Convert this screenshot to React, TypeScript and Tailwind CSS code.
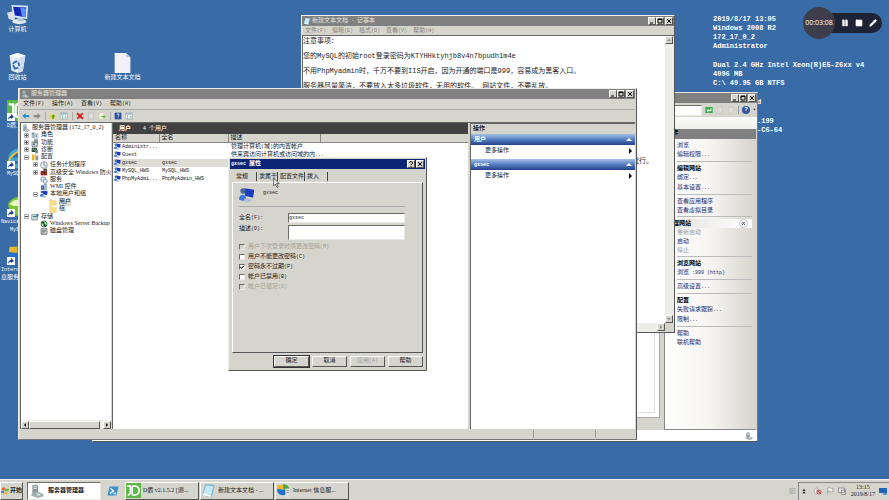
import React from 'react';
import { Pause, Square, Pencil } from 'lucide-react';

type IconName =
  | 'computer'
  | 'recycle'
  | 'file'
  | 'shield'
  | 'mysql'
  | 'navicat'
  | 'globe'
  | 'server'
  | 'user'
  | 'roles'
  | 'features'
  | 'diag'
  | 'config'
  | 'clock'
  | 'wall'
  | 'service'
  | 'wmi'
  | 'folder'
  | 'storage'
  | 'backup'
  | 'disk'
  | 'notepad'
  | 'powershell'
  | 'back'
  | 'forward'
  | 'up'
  | 'panel'
  | 'delete'
  | 'page'
  | 'export'
  | 'help'
  | 'go'
  | 'flag'
  | 'windows';

const drawings: Record<IconName, React.ReactNode> = {
  computer: (
    <>
      <path d="M0 10l8-2 1 11-7-2z" fill="#d9dfe6" />
      <ellipse cx="14" cy="20" rx="8" ry="3" fill="#e6ecf2" />
      <path d="M12 15h6l1 5h-6z" fill="#b3c2d3" />
      <path d="M5 1l19 1-1 15-16-2z" fill="#dce8f5" />
      <path d="M7 3l15 1-1 11-12-2z" fill="#1226ae" />
      <path d="M15 4l7 1-1 10-4-1z" fill="#5b8df0" />
    </>
  ),
  recycle: (
    <>
      <path d="M3 4l9-3 9 3-3 18-6 2-7-3z" fill="#e3ebf3" />
      <path d="M3 4l9 3 9-3-9-3z" fill="#fbfdff" />
      <path d="M13 7l8-3-3 18-5 2z" fill="#cfdce9" />
      <path d="M7 14a4 4 0 0 1 5-3M7 15l2 4 4-1M13 12l1 4" fill="none" stroke="#2b66bf" strokeWidth="2" />
    </>
  ),
  file: (
    <>
      <path d="M3 1h13l5 5v18H3z" fill="#f0f2f8" />
      <path d="M16 1l5 5h-5z" fill="#bfc8d9" />
    </>
  ),
  shield: (
    <>
      <path d="M0 0h24v24H0z" fill="#5cb947" />
      <path d="M2 5h5v11l-4 4M10 5v14M10 5h5c8 1 8 13 0 14h-5" fill="none" stroke="#fff" strokeWidth="2.5" />
    </>
  ),
  mysql: (
    <>
      <circle cx="13" cy="12" r="9" fill="none" stroke="#42a5d8" strokeWidth="5" />
      <path d="M5 13h17" stroke="#42a5d8" strokeWidth="4" />
      <path d="M1 20C2 9 12 2 23 2" fill="none" stroke="#f2c02c" strokeWidth="2" />
    </>
  ),
  navicat: (
    <>
      <path d="M1 9C8-2 20-1 24 7v13c-6 4-18 4-21-3z" fill="#79c52c" />
      <path d="M3 9c6-7 14-6 17-2-4 5-11 6-17 2z" fill="#e9fbc8" />
    </>
  ),
  globe: (
    <>
      <path d="M3 3h9v7H2z" fill="#e9b62d" />
      <path d="M11 2c8 0 10 4 10 8l-9 2z" fill="#58a647" />
      <path d="M2 9l12 2 6 3c-3 8-16 7-18-1z" fill="#2272c9" />
      <path d="M15 9h7v14h-7z" fill="#dce0e2" />
      <path d="M17 12h4M17 15h4" stroke="#6f7b83" strokeWidth="1" />
    </>
  ),
  server: (
    <>
      <path d="M4 2l7-1 3 2v15l-7 2-3-3z" fill="#8b999d" />
      <path d="M6 5l6-1M6 8l6-1" stroke="#e6eded" strokeWidth="1.5" />
      <path d="M2 18l10-5 11 4v4l-9 3-12-4z" fill="#a4b0b2" />
      <path d="M11 16l8 2-5 3z" fill="#dae2e2" />
    </>
  ),
  user: (
    <>
      <path d="M8 2l15 2-2 12-12-3z" fill="#1d3bc0" />
      <circle cx="6" cy="6" r="4" fill="#47669d" />
      <path d="M0 19c0-10 10-9 11-2l-4 4z" fill="#3976dd" />
      <path d="M9 17l11 2-5 4-9-2z" fill="#adbdd0" />
    </>
  ),
  roles: (
    <>
      <path d="M2 4h9v17H2z" fill="#a9b7bd" />
      <path d="M10 8h11v14H10z" fill="#dce5ea" stroke="#647d89" />
      <path d="M4 8h5M13 12h5M13 16h5" stroke="#397c91" strokeWidth="2" />
    </>
  ),
  features: (
    <>
      <path d="M3 9h16v13H3z" fill="#dce1e3" stroke="#4c5459" strokeWidth="2" />
      <path d="M10 2h10v10H10z" fill="#7f9599" stroke="#4c5459" />
      <circle cx="9" cy="16" r="3" fill="#3c708f" />
    </>
  ),
  diag: (
    <>
      <path d="M2 5h16v13H2z" fill="#334b45" />
      <path d="M4 13l4-4 3 4 4-6" fill="none" stroke="#5ee374" strokeWidth="2" />
      <path d="M13 12h8v10h-8z" fill="#7c8988" />
    </>
  ),
  config: (
    <>
      <path d="M3 5h8v17H3z" fill="#e5b62e" />
      <path d="M9 2h6v20H9z" fill="#f2d970" />
      <path d="M14 8h8v14h-8z" fill="#8c9ba9" />
    </>
  ),
  clock: (
    <>
      <circle cx="12" cy="12" r="10" fill="#edf1f5" stroke="#66737c" strokeWidth="2" />
      <path d="M12 5v7l5 3" fill="none" stroke="#334452" strokeWidth="2" />
    </>
  ),
  wall: (
    <>
      <path d="M2 9h19v13H2z" fill="#a82b23" />
      <path d="M2 13h19M2 18h19M8 9v4M14 13v5" stroke="#5b1711" strokeWidth="1" />
      <path d="M10 2h11v9H10z" fill="#5d4f4b" />
    </>
  ),
  service: (
    <>
      <circle cx="10" cy="10" r="8" fill="#c4d8e7" stroke="#7193ac" strokeWidth="2" />
      <circle cx="16" cy="16" r="6" fill="#e5edf2" stroke="#628ba9" strokeWidth="2" />
    </>
  ),
  wmi: (
    <>
      <path d="M3 7h11v14H3z" fill="#507ab3" />
      <path d="M12 3h8v18h-8z" fill="#aebfcb" stroke="#546c81" />
    </>
  ),
  folder: <path d="M2 5h8l3 3h9v14H2z" fill="#f6dd8b" stroke="#ddb854" />,
  storage: (
    <>
      <path d="M2 5h17v16H2z" fill="#c9d9de" stroke="#668a95" strokeWidth="2" />
      <path d="M6 9h12v3H6z" fill="#467d91" />
      <path d="M17 3h5v8h-5z" fill="#32629f" />
    </>
  ),
  backup: (
    <>
      <circle cx="12" cy="12" r="9" fill="#c4e7c0" stroke="#40824f" strokeWidth="3" />
      <path d="M4 6l8 7V6M20 18l-8-6v7" stroke="#1e7532" strokeWidth="3" />
    </>
  ),
  disk: (
    <>
      <path d="M3 5h18v17H3z" fill="#d5d6d5" stroke="#505653" strokeWidth="2" />
      <path d="M6 10h11M6 14h11M6 18h7" stroke="#505653" strokeWidth="2" />
    </>
  ),
  notepad: (
    <>
      <path d="M7 2l15 1-5 20-15-3z" fill="#6db5d3" />
      <path d="M8 4l12 1-4 14-12-2z" fill="#c7e9f4" />
      <path d="M3 18l13 3" stroke="#fff" strokeWidth="3" />
    </>
  ),
  powershell: (
    <>
      <path d="M5 3h18l-4 18H1z" fill="#3a91d0" />
      <path d="M7 7l6 5-7 5M13 17h5" fill="none" stroke="#fff" strokeWidth="3" />
    </>
  ),
  back: <path d="M11 3v6h11v7H11v5L1 12z" fill="#2a8fd0" />,
  forward: <path d="M13 3v6H2v7h11v5l10-9z" fill="#898c8b" />,
  up: (
    <>
      <path d="M2 5h8l3 3h9v14H2z" fill="#f0d567" />
      <path d="M10 21v-7H6l7-7 6 7h-4v7z" fill="#46a43e" />
    </>
  ),
  panel: (
    <>
      <path d="M1 3h22v18H1z" fill="#fff" stroke="#8b9eac" strokeWidth="2" />
      <path d="M2 4h20v4H2z" fill="#8cb0c4" />
      <path d="M8 9v12M14 13h6M14 17h6" stroke="#56987b" strokeWidth="2" />
    </>
  ),
  delete: <path d="M3 4l18 16M20 4L4 20" stroke="#d2221f" strokeWidth="6" />,
  page: <path d="M5 3h14v18H5z" fill="#e2e2df" stroke="#b9b9b4" strokeWidth="2" />,
  export: (
    <>
      <path d="M3 2h14v20H3z" fill="#f4f3db" stroke="#b8b894" />
      <path d="M10 12h7V8l6 6-6 6v-4h-7z" fill="#6db551" />
    </>
  ),
  help: (
    <>
      <path d="M2 2h20v20H2z" fill="#294b9c" />
      <path d="M9 9c0-5 7-4 6 0 0 2-3 3-3 5M12 17v2" fill="none" stroke="#fff" strokeWidth="2.5" />
    </>
  ),
  go: (
    <>
      <path d="M1 3h22v18H1z" fill="#35ad40" />
      <path d="M18 7v7H7M11 9l-5 5 5 4" fill="none" stroke="#fff" strokeWidth="3" />
    </>
  ),
  flag: <path d="M5 23V3c6-3 8 3 16 0v11c-7 3-10-3-16 0" fill="#eee" stroke="#8d8d88" strokeWidth="2" />,
  windows: (
    <>
      <path d="M3 5c4-2 5-2 8 0l-2 7c-3-2-5-2-8 0z" fill="#e2652d" />
      <path d="M12 6c4 2 6 2 10 0l-2 7c-4 2-6 1-10 0z" fill="#72b53e" />
      <path d="M1 13c3-2 5-1 8 0l-2 7c-3-2-4-2-7 0z" fill="#3e83cd" />
      <path d="M10 14c4 2 6 2 9 0l-2 7c-3 2-6 2-9 0z" fill="#edbd31" />
    </>
  ),
};

const Icon = ({ name, className = 'size-2' }: { name: IconName; className?: string }) => (
  <svg viewBox="0 0 24 24" className={`shrink-0 ${className}`} aria-hidden="true">
    {drawings[name]}
  </svg>
);

// Latin runs are set narrower, so they stay close to half the width of a Chinese character
const Txt = ({ children, latin = 'text-[5px]' }: { children: string; latin?: string }) => (
  <>
    {children.split(/([ -~]+)/).map((part, i) =>
      i % 2 ? (
        <span key={i} className={`whitespace-pre ${latin}`}>
          {part}
        </span>
      ) : (
        part
      ),
    )}
  </>
);

const bevel = 'border border-t-white border-l-white border-r-[#55554f] border-b-[#55554f] bg-[#d6d5cd]';
const sunken = 'border border-t-[#6b6b66] border-l-[#6b6b66] border-r-[#e9e8e2] border-b-[#e9e8e2]';

const CaptionButtons = ({ kinds = ['min', 'max', 'close'] }: { kinds?: string[] }) => (
  <div className="ml-auto flex">
    {kinds.map((kind) => (
      <button key={kind} aria-label={kind} className={`size-2 ${bevel} ${kind === 'close' ? 'ml-px' : ''}`}>
        <svg viewBox="0 0 6 6" className="size-full" fill="none" stroke="#000" strokeWidth="1">
          {kind === 'min' && <path d="M1 5h3" />}
          {kind === 'max' && <path d="M1 1h4v4H1zM1 1.5h4" />}
          {kind === 'close' && <path d="M1 1l4 4M5 1L1 5" />}
          {kind === 'help' && <path d="M1.500 2c0-2 3-2 3 0 0 1-1.500 1-1.500 2M3 5v1" />}
        </svg>
      </button>
    ))}
  </div>
);

const ScrollButton = ({ d, label, off }: { d: string; label: string; off?: boolean }) => (
  <button aria-label={label} className={`size-2 shrink-0 ${bevel}`}>
    <svg viewBox="0 0 6 6" className="size-full" fill={off ? '#8a8a85' : '#000'}>
      <path d={d} />
    </svg>
  </button>
);

const desktopIcons: { icon: IconName; label: string[]; shortcut?: boolean }[] = [
  { icon: 'computer', label: ['计算机'] },
  { icon: 'recycle', label: ['回收站'] },
  { icon: 'shield', label: ['D盾_Web'], shortcut: true },
  { icon: 'mysql', label: ['MySQL-F'], shortcut: true },
  { icon: 'navicat', label: ['Navicat for', 'MySQL'], shortcut: true },
  { icon: 'globe', label: ['Internet 信', '息服务(IIS)'], shortcut: true },
];

const DesktopIcon = ({ icon, label, shortcut }: { icon: IconName; label: string[]; shortcut?: boolean }) => (
  <button className="relative flex h-12 w-[35px] flex-col items-center text-white">
    <Icon name={icon} className="size-[21px]" />
    {shortcut && (
      <svg viewBox="0 0 8 8" className="absolute left-[7px] top-[13px] size-2">
        <path d="M0 0h8v8H0z" fill="#fff" />
        <path d="M1 7c0-3 2-4 3-4V1l3 3-3 2V5C3 5 2 5 1 7z" fill="#13449b" />
      </svg>
    )}
    <span className="mt-px flex flex-col items-center leading-[7px] whitespace-nowrap">
      {label.map((line) => (
        <span key={line}>
          <Txt>{line}</Txt>
        </span>
      ))}
    </span>
  </button>
);

const systemInfo = [
  ['2019/8/17 13:05', 'Windows 2008 R2', '172_17_0_2', 'Administrator'],
  ['Dual 2.4 GHz Intel Xeon(R)E5-26xx v4', '4096 MB', 'C:\\ 49.95 GB NTFS'],
];
const systemInfoTail = [['d'], ['.199', '-C6-64']];

const WallpaperInfo = () => (
  <div className="absolute left-[713px] top-[15px] flex flex-col gap-[10px] font-['Liberation_Mono',monospace] text-[7px] leading-[9px] font-bold whitespace-pre text-white">
    {systemInfo.map((group) => (
      <div key={group[0]}>
        {group.map((line) => (
          <p key={line}>{line}</p>
        ))}
      </div>
    ))}
    {systemInfoTail.map((group) => (
      <div key={group[0]} className="pl-11">
        {group.map((line) => (
          <p key={line}>{line}</p>
        ))}
      </div>
    ))}
  </div>
);

const siteActions: { title?: string; items: { text: string; off?: boolean }[]; bar?: boolean }[] = [
  { items: [{ text: '浏览' }, { text: '编辑权限...' }] },
  { title: '编辑网站', items: [{ text: '绑定...' }, { text: '基本设置...' }] },
  { items: [{ text: '查看应用程序' }, { text: '查看虚拟目录' }] },
  { title: '理网站', bar: true, items: [{ text: '重新启动', off: true }, { text: '启动' }, { text: '停止', off: true }] },
  { title: '浏览网站', items: [{ text: '浏览 :999 (http)' }] },
  { items: [{ text: '高级设置...' }] },
  { title: '配置', items: [{ text: '失败请求跟踪...' }, { text: '限制...' }] },
  { items: [{ text: '帮助' }, { text: '联机帮助' }] },
];

const IisWindow = () => (
  <section className="absolute left-[92px] top-[92px] flex h-[350px] w-[666px] flex-col border border-t-[#e8e7e1] border-l-[#e8e7e1] border-r-[#777] border-b-[#555] bg-[#d6d5cd]">
    <header className="flex h-[10px] items-center bg-[#808080] px-px">
      <CaptionButtons />
    </header>
    <div className="flex h-[14px] items-center gap-[3px] pr-px pl-1">
      <input aria-label="地址" readOnly className={`h-[11px] flex-1 bg-white ${sunken}`} />
      <button aria-label="转到"><Icon name="go" /></button>
      <button aria-label="停止"><Icon name="page" className="size-2 opacity-50" /></button>
      <button aria-label="刷新"><Icon name="page" className="size-2 opacity-70" /></button>
      <span className="h-2 w-px bg-[#999]" />
      <button aria-label="帮助" className="flex size-2 items-center justify-center rounded-full bg-[#3157a4] text-[6px] leading-none font-bold text-white">?</button>
      <span className="text-[5px]">▾</span>
    </div>
    <div className="h-3 bg-linear-to-b from-[#fbfbfa] to-[#eeeeea]" />
    <div className="flex min-h-0 flex-1">
      <div className="mb-3 mr-1 flex-1 border-r border-b border-[#aaa] bg-white pr-1 pb-1">
        <div className="size-full border-r border-b border-[#ddd]" />
      </div>
      <aside className="mr-px w-[92px] border-b border-l border-[#888] bg-linear-to-r from-white via-[#f5f4f1] to-[#d6d4cc] text-[#2a2468]">
        <h2 className="h-[10px] bg-[#808080] pl-px font-bold text-black">操作</h2>
        {siteActions.map(({ title, items, bar }, i) => (
          <div key={i} className="mr-1 ml-3 border-b border-[#bbb] pt-[2px] pb-px leading-[9px] last:border-b-0">
            {title && (
              <h3 className={`flex font-bold text-black ${bar ? '-ml-2 bg-linear-to-r from-[#e2e1dc] to-white pl-1' : ''}`}>
                {title}
                {bar && (
                  <span className="mr-1 ml-auto flex size-[9px] items-center justify-center rounded-full border border-[#ccc] bg-white">
                    <svg viewBox="0 0 6 6" className="size-[5px]" fill="none" stroke="#333">
                      <path d="M1 3l2-2 2 2M1 5l2-2 2 2" />
                    </svg>
                  </span>
                )}
              </h3>
            )}
            {items.map(({ text, off }) => (
              <a key={text} href="#" className={`block ${off ? 'text-[#999]' : ''}`}>
                <Txt>{text}</Txt>
              </a>
            ))}
          </div>
        ))}
      </aside>
    </div>
    <footer className="flex h-[11px] items-center justify-end bg-white px-1">
      <Icon name="server" />
    </footer>
  </section>
);

const noteText = [
  '注意事项：',
  '您的MySQL的初始root登录密码为KTYHHktyhjb8v4n7bpudh1m4e',
  '不用PhpMyadmin时，千万不要到IIS开启，因为开通的端口是999，容易成为黑客入口。',
  '服务器尽量简洁，不要放入太多垃圾软件，无用的软件。 网站文件，不要乱放。',
  '',
  '',
  '',
  '',
  '\u3000'.repeat(47) + '就行。',
].join('\n');

const NotepadWindow = () => (
  <section className="absolute left-[301px] top-[15px] flex h-[318px] w-[374px] flex-col border border-t-[#f2f1ec] border-l-[#f2f1ec] border-r-[#555] border-b-[#555] bg-[#d6d5cd]">
    <header className="flex h-[10px] items-center gap-px bg-[#808080] px-px text-[#e6e5de]">
      <Icon name="notepad" />
      <h1><Txt>新建文本文档 - 记事本</Txt></h1>
      <CaptionButtons />
    </header>
    <nav className="flex h-[9px] items-center gap-[6px] px-[3px] text-[#84847e]">
      {['文件(F)', '编辑(E)', '格式(O)', '查看(V)', '帮助(H)'].map((item) => (
        <button key={item}><Txt>{item}</Txt></button>
      ))}
    </nav>
    <div className="flex min-h-0 flex-1 border-t border-l border-[#666] bg-white">
      <textarea
        aria-label="文档内容"
        readOnly
        wrap="off"
        defaultValue={noteText}
        className="-mt-[2px] flex-1 resize-none overflow-hidden font-['Liberation_Mono','Noto_Sans_CJK_SC',monospace] text-[7px] leading-[15px] text-[#222]"
      />
      <div className="flex w-[9px] flex-col justify-between bg-[#edece7]">
        <ScrollButton label="向上滚动" d="M1 4h4L3 2z" off />
        <ScrollButton label="向下滚动" d="M1 2h4L3 4z" off />
      </div>
    </div>
    <div className="flex h-[9px] justify-end bg-[#edece7]">
      <ScrollButton label="向右滚动" d="M2 1v4l2-2z" off />
      <span className="w-[9px] bg-[#d6d5cd]" />
    </div>
  </section>
);

const treeRows: { icon: IconName; text: string; level: number; mark?: string; active?: boolean }[] = [
  { icon: 'server', text: '服务器管理器 (172_17_0_2)', level: 0 },
  { icon: 'roles', text: '角色', level: 1, mark: '+' },
  { icon: 'features', text: '功能', level: 1, mark: '+' },
  { icon: 'diag', text: '诊断', level: 1, mark: '+' },
  { icon: 'config', text: '配置', level: 1, mark: '-' },
  { icon: 'clock', text: '任务计划程序', level: 2, mark: '+' },
  { icon: 'wall', text: '高级安全 Windows 防火墙', level: 2, mark: '+' },
  { icon: 'service', text: '服务', level: 2 },
  { icon: 'wmi', text: 'WMI 控件', level: 2 },
  { icon: 'user', text: '本地用户和组', level: 2, mark: '-' },
  { icon: 'folder', text: '用户', level: 3, active: true },
  { icon: 'folder', text: '组', level: 3 },
  { icon: 'storage', text: '存储', level: 1, mark: '-' },
  { icon: 'backup', text: 'Windows Server Backup', level: 2 },
  { icon: 'disk', text: '磁盘管理', level: 2 },
];

const levelPadding = ['pl-0', 'pl-[2px]', 'pl-[11px]', 'pl-5'];

const Tree = () => (
  <div className="flex w-[90px] shrink-0 flex-col overflow-hidden bg-white">
    <ul className="flex h-[112px] flex-col pt-px pl-px">
      {treeRows.map(({ icon, text, level, mark, active }) => (
        <li key={text} className={`flex min-h-0 flex-1 items-center gap-[2px] whitespace-nowrap ${levelPadding[level]}`}>
          {level > 0 && (
            <span className="flex size-[5px] shrink-0 items-center justify-center">
              {mark && (
                <svg viewBox="0 0 5 5" className="size-full">
                  <path d="M.5.5h4v4h-4z" fill="#fff" stroke="#aaa" />
                  <path d={mark === '+' ? 'M1 2.500h3M2.500 1v3' : 'M1 2.500h3'} stroke="#555" />
                </svg>
              )}
            </span>
          )}
          <Icon name={icon} />
          <span className={active ? 'bg-[#dddcd5]' : ''}>
            <Txt latin="font-['Liberation_Serif',serif]">{text}</Txt>
          </span>
        </li>
      ))}
    </ul>
    <div className="mt-auto flex h-[9px] items-center bg-[#edece7]">
      <ScrollButton label="向左滚动" d="M4 1v4L2 3z" />
      <span className={`mr-[3px] h-2 flex-1 ${bevel}`} />
      <ScrollButton label="向右滚动" d="M2 1v4l2-2z" />
    </div>
  </div>
);

const users = [
  { name: 'Administr...', full: '', about: '管理计算机(域)的内置帐户' },
  { name: 'Guest', full: '', about: '供来宾访问计算机或访问域的内...' },
  { name: 'gxsec', full: 'gxsec', about: '' },
  { name: 'MySQL_HWS', full: 'MySQL_HWS', about: '' },
  { name: 'PhpMyAdmi...', full: 'PhpMyAdmin_HWS', about: '' },
];

const UserList = () => (
  <div className="min-w-0 flex-1 bg-white">
    <h2 className="flex h-[11px] items-center gap-3 bg-[#414141] px-[6px] text-white">
      <b>用户</b>
      <span><Txt>4 个用户</Txt></span>
    </h2>
    <table className="w-full table-fixed text-left leading-[8px]">
      <colgroup>
        <col className="w-[46px]" />
        <col className="w-[69px]" />
        <col className="w-[92px]" />
        <col />
      </colgroup>
      <thead>
        <tr className="h-2 bg-[#d6d5cd]">
          {['名称', '全名', '描述', ''].map((head, i) => (
            <th key={i} className="h-2 border-r border-b border-[#888] p-0 pl-[2px] leading-[7px] font-normal last:border-r-0">
              {head}
            </th>
          ))}
        </tr>
      </thead>
      <tbody>
        {users.map(({ name, full, about }) => (
          <tr key={name} className="h-2">
            <td className={`p-0 pl-px ${name === 'gxsec' ? 'bg-[#dddcd5]' : ''}`}>
              <span className="flex h-2 items-center gap-px">
                <Icon name="user" className="size-[7px]" />
                <Txt>{name}</Txt>
              </span>
            </td>
            <td className={`p-0 pl-[3px] whitespace-nowrap ${name === 'gxsec' ? 'bg-[#dddcd5]' : ''}`}>
              <span className="flex h-2 items-center"><Txt>{full}</Txt></span>
            </td>
            <td className="p-0 pl-[3px] whitespace-nowrap"><Txt>{about}</Txt></td>
            <td className="p-0" />
          </tr>
        ))}
      </tbody>
    </table>
  </div>
);

const ActionPane = () => (
  <aside className="w-[165px] shrink-0 border-t border-l border-[#666] bg-white">
    <h2 className="h-[10px] bg-[#d6d5cd] pl-[2px] leading-[10px] font-bold">操作</h2>
    {['用户', 'gxsec'].map((title) => (
      <div key={title} className="mb-[3px]">
        <h3 className="flex h-[11px] items-center justify-between bg-linear-to-b from-[#a4c1e6] via-[#557fc0] to-[#263f8d] px-[3px] font-bold text-white">
          <Txt>{title}</Txt>
          <svg viewBox="0 0 6 4" className="h-1 w-[6px]" fill="#fff">
            <path d="M0 3l3-3 3 3z" />
          </svg>
        </h3>
        <button className="flex h-[11px] w-full items-center justify-between pr-[3px] pl-[14px]">
          更多操作
          <svg viewBox="0 0 3 6" className="h-[6px] w-[3px]">
            <path d="M0 0v6l3-3z" />
          </svg>
        </button>
      </div>
    ))}
  </aside>
);

const toolbar: IconName[][] = [
  ['back', 'forward'],
  ['up', 'panel'],
  ['delete', 'page', 'export'],
  ['help', 'panel'],
];

const ServerManager = () => (
  <section className="absolute left-[18px] top-[88px] flex h-[352px] w-[619px] flex-col border border-t-[#edece7] border-l-[#edece7] border-r-[#555] border-b-[#777] bg-[#d6d5cd] px-px">
    <header className="flex h-[10px] items-center gap-[2px] bg-[#808080] px-px text-[#e6e5de]">
      <Icon name="server" />
      <h1>服务器管理器</h1>
      <CaptionButtons />
    </header>
    <nav className="flex h-[11px] items-center gap-2 border-b border-[#aaa] px-[3px]">
      {['文件(F)', '操作(A)', '查看(V)', '帮助(H)'].map((item) => (
        <button key={item}><Txt>{item}</Txt></button>
      ))}
    </nav>
    <div className="flex h-3 items-center gap-1 px-[2px]">
      {toolbar.map((group, i) => (
        <div key={i} className="flex gap-[3px] border-l border-[#aaa] pl-[3px] first:border-l-0 first:pl-0">
          {group.map((name) => (
            <button key={name} aria-label={name}><Icon name={name} /></button>
          ))}
        </div>
      ))}
    </div>
    <div className="flex min-h-0 flex-1 gap-px border-t border-l border-[#666]">
      <Tree />
      <div className="flex min-w-0 flex-1 gap-[2px] border-l border-[#666]">
        <UserList />
        <ActionPane />
      </div>
    </div>
    <footer className="flex h-[10px] justify-end py-px">
      <span className="w-[62px] border-l border-[#999]" />
      <span className="w-10 border-l border-[#999]" />
    </footer>
  </section>
);

const tabs = [
  { text: '常规', pad: 'pr-2 pl-[5px]' },
  { text: '隶属于', pad: 'pl-[2px]' },
  { text: '配置文件', pad: 'pl-[2px]' },
  { text: '拨入', pad: 'pr-2 pl-[2px]' },
];

const options = [
  { id: 'must-change', text: '用户下次登录时须更改密码(M)', off: true },
  { id: 'cannot-change', text: '用户不能更改密码(C)' },
  { id: 'never-expires', text: '密码永不过期(P)', on: true },
  { id: 'disabled', text: '帐户已禁用(B)' },
  { id: 'locked', text: '帐户已锁定(O)', off: true },
];

const PropertiesDialog = () => (
  <section
    role="dialog"
    aria-label="gxsec 属性"
    className="absolute left-[228px] top-[157px] flex h-[214px] w-[199px] flex-col border border-t-[#edece7] border-l-[#edece7] border-r-[#555] border-b-[#555] bg-[#d6d5cd] p-px"
  >
    <header className="flex h-[10px] shrink-0 items-center bg-[#0c2474] px-px font-bold text-white">
      <h1><Txt>gxsec 属性</Txt></h1>
      <CaptionButtons kinds={['help', 'close']} />
    </header>
    <div className="mt-px ml-px flex h-3 items-center leading-[9px]">
      {tabs.map(({ text, pad }) => (
        <button key={text} className={`border-r border-[#444] ${pad}`}>
          {text}
        </button>
      ))}
    </div>
    <form className="mx-[2px] flex flex-1 flex-col border border-t-white border-l-white border-r-[#555] border-b-[#555] pt-1 pr-[17px] pl-[6px]">
      <div className="flex h-5 items-center gap-2 border-b border-[#aaa] pb-1">
        <Icon name="user" className="size-4" />
        <span className="-mt-1"><Txt>gxsec</Txt></span>
      </div>
      <div className="mt-[6px] flex items-center">
        <label htmlFor="full-name" className="w-[49px]"><Txt>全名(F):</Txt></label>
        <input
          id="full-name"
          defaultValue="gxsec"
          className={`h-[10px] min-w-0 flex-1 bg-white font-['Liberation_Mono',monospace] text-[5px] ${sunken}`}
        />
      </div>
      <div className="mt-[2px] flex items-start">
        <label htmlFor="about" className="w-[49px]"><Txt>描述(D):</Txt></label>
        <textarea id="about" className={`h-[15px] min-w-0 flex-1 resize-none bg-white ${sunken}`} />
      </div>
      <div className="mt-[2px] flex flex-col">
        {options.map(({ id, text, on, off }) => (
          <label key={id} htmlFor={id} className={`flex h-[10px] items-center gap-[3px] ${off ? 'text-[#a2a19b]' : ''}`}>
            <input
              id={id}
              type="checkbox"
              defaultChecked={on}
              disabled={off}
              className={`peer size-[6px] appearance-none bg-white disabled:bg-[#d6d5cd] ${sunken}`}
            />
            <svg viewBox="0 0 6 6" className="-ml-[9px] hidden size-[6px] peer-checked:block" fill="none" stroke="#000">
              <path d="M1 2.500l1.500 2L5 1.500" />
            </svg>
            <span><Txt>{text}</Txt></span>
          </label>
        ))}
      </div>
    </form>
    <div className="flex h-[16px] shrink-0 items-center justify-end gap-[3px] pr-[2px]">
      {['确定', '取消', '应用(A)', '帮助'].map((item, i) => (
        <button
          key={item}
          disabled={i === 2}
          className={`h-[11px] w-[35px] disabled:text-[#a2a19b] ${bevel} ${i === 0 ? 'outline outline-[#333]' : ''}`}
        >
          <Txt>{item}</Txt>
        </button>
      ))}
    </div>
  </section>
);

const Recorder = () => (
  <div className="absolute top-[7px] right-[7px] flex items-center">
    <span className="z-10 flex size-8 items-center justify-center rounded-full bg-[#3e3d4b] font-['Open_Sans',sans-serif] text-[7px] text-white">
      00:03:08
    </span>
    <div className="-ml-4 flex h-5 items-center gap-[6px] rounded-r-full bg-[#1e2335] pr-[5px] pl-[22px] text-white">
      <button aria-label="暂停"><Pause className="size-2" fill="currentColor" /></button>
      <button aria-label="停止"><Square className="size-2" fill="currentColor" /></button>
      <button aria-label="画笔"><Pencil className="size-2" fill="currentColor" /></button>
    </div>
  </div>
);

const tasks: { icon: IconName; text: string }[] = [
  { icon: 'shield', text: 'D盾 v2.1.5.2 [测...' },
  { icon: 'notepad', text: '新建文本文档 - ...' },
  { icon: 'globe', text: 'Internet 信息服...' },
];

const Taskbar = () => (
  <footer className="flex h-[21px] items-center border-t border-[#f0efea] bg-[#d6d5cd] pt-px">
    <button className={`flex h-[18px] w-[23px] items-center ${bevel}`}>
      <Icon name="windows" className="size-[9px]" />
      <b>开始</b>
    </button>
    <button className={`ml-1 flex h-[18px] w-[74px] items-center gap-1 bg-white pl-[2px] font-bold ${sunken}`}>
      <Icon name="server" className="size-[14px]" />
      服务器管理器
    </button>
    <button aria-label="PowerShell" className="ml-[6px]"><Icon name="powershell" className="size-3" /></button>
    <div className="ml-[6px] flex gap-px">
      {tasks.map(({ icon, text }) => (
        <button key={text} className={`flex h-[18px] w-[74px] items-center gap-[2px] whitespace-nowrap ${bevel}`}>
          <Icon name={icon} className="size-[15px]" />
          <span><Txt latin="font-['Liberation_Serif',serif]">{text}</Txt></span>
        </button>
      ))}
    </div>
    <Icon name="disk" className="mr-[2px] ml-auto size-[7px] opacity-50" />
    <div className="flex h-[18px] items-center gap-1 border-t border-l border-[#888] pr-[2px] pl-[3px]">
      <svg viewBox="0 0 4 6" className="h-[5px] w-1">
        <path d="M0 2l2-2 2 2zM0 5l2-2 2 2z" />
      </svg>
      <svg viewBox="0 0 16 16" className="ml-1 size-2">
        <path d="M1 5l5-4v14l-5-4z" fill="#eee" stroke="#999" />
        <circle cx="10" cy="10" r="4" fill="#fff" stroke="#c33128" strokeWidth="2" />
        <path d="M7 7l6 6" stroke="#c33128" strokeWidth="2" />
      </svg>
      <Icon name="flag" />
      <svg viewBox="0 0 16 16" className="size-2" fill="#eee" stroke="#777" strokeWidth="1.500">
        <path d="M1 2h12v9H1zM7 6h8v9H7z" />
      </svg>
      <time className="ml-px text-center font-['Liberation_Serif',serif] text-[6px] leading-[7px]">
        13:15
        <br />
        2019/8/17
      </time>
      <svg viewBox="0 0 8 7" className="h-[7px] w-2">
        <path d="M0 0h8v5H0z" fill="#2166b4" />
        <path d="M4 5h4v2H4z" fill="#6a90bc" />
      </svg>
    </div>
  </footer>
);

export default function App() {
  return (
    <main className="flex min-h-screen flex-col overflow-hidden bg-[#396ba6] font-['Liberation_Mono','Noto_Sans_CJK_SC',monospace] text-[6px] leading-[8px] text-[#1a1a1a]">
      <div className="relative flex-1">
        <div className="flex items-start pt-1">
          <div className="flex flex-col">
            {desktopIcons.map((item) => (
              <DesktopIcon key={item.icon} {...item} />
            ))}
          </div>
          <div className="mt-12 ml-[70px]">
            <DesktopIcon icon="file" label={['新建文本文档']} />
          </div>
        </div>
        <WallpaperInfo />
        <IisWindow />
        <NotepadWindow />
        <ServerManager />
        <PropertiesDialog />
        <svg viewBox="0 0 12 18" className="absolute left-[273px] top-[178px] h-[10px] w-[7px]" fill="#fff" stroke="#000">
          <path d="M1 1v13l3-3 3 6 2-1-3-6h5z" />
        </svg>
        <Recorder />
      </div>
      <Taskbar />
    </main>
  );
}
